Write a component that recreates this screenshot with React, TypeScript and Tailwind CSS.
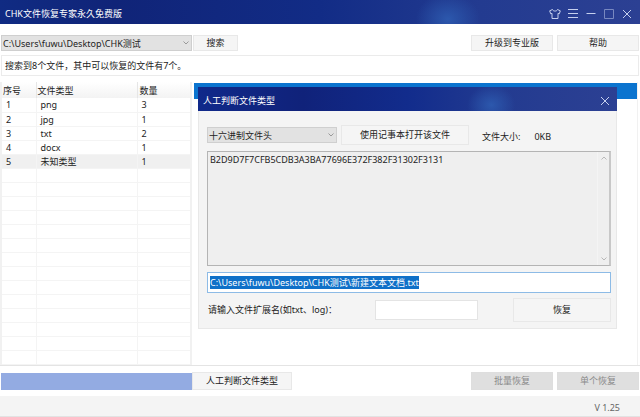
import { useEffect, useRef } from "react";
import type { ReactNode } from "react";

const results = [
  { type: "png", count: 3 },
  { type: "jpg", count: 1 },
  { type: "txt", count: 2 },
  { type: "docx", count: 1 },
  { type: "未知类型", count: 1 },
];

const emptyRows = Array.from({ length: 14 }, (_, i) => i);

function ShirtIcon() {
  return (
    <svg viewBox="0 0 12 12" className="size-3" fill="none" stroke="currentColor" strokeWidth="1" strokeLinejoin="round">
      <path d="M3.500 1.500.7 2.800l1 3 1.300-.4v5.100h6V5.400l1.300.4 1-3-2.800-1.300C8 3.600 4 3.600 3.500 1.500Z" />
    </svg>
  );
}

function MenuIcon() {
  return (
    <svg viewBox="0 0 12 12" className="size-3" fill="none" stroke="currentColor">
      <path d="M1 1.500h10M1 5.500h10M1 9.500h10" />
    </svg>
  );
}

function MinimizeIcon() {
  return (
    <svg viewBox="0 0 12 12" className="size-3" fill="none" stroke="currentColor">
      <path d="M1.500 5.500h9" />
    </svg>
  );
}

function MaximizeIcon() {
  return (
    <svg viewBox="0 0 12 12" className="size-3" fill="none" stroke="currentColor" opacity="0.5">
      <path d="M1.500 1.500h9v9h-9z" />
    </svg>
  );
}

function CloseIcon() {
  return (
    <svg viewBox="0 0 12 12" className="size-3" fill="none" stroke="currentColor">
      <path d="m2 2 8 8M10 2l-8 8" />
    </svg>
  );
}

function Chevron({ up = false }: { up?: boolean }) {
  return (
    <svg viewBox="0 0 8 8" className="size-2" fill="none" stroke="currentColor">
      <path d={up ? "m1.500 5.500 2.500-2.500 2.500 2.500" : "m1.500 2.500 2.500 2.500 2.500-2.500"} />
    </svg>
  );
}

function IconButton({ label, children }: { label: string; children: ReactNode }) {
  return (
    <button type="button" aria-label={label} className="flex text-[#c6d0ee]">
      {children}
    </button>
  );
}

function PlainButton({ children, className }: { children: ReactNode; className: string }) {
  return (
    <button type="button" className={`border border-[#e8e8e8] bg-[#f5f5f5] ${className}`}>
      {children}
    </button>
  );
}

function Dropdown({ label, value, className }: { label: string; value: string; className: string }) {
  return (
    <div className={`relative h-4 ${className}`}>
      <select
        aria-label={label}
        className="block h-full w-full appearance-none border border-[#cfcfcf] bg-[#e2e2e2] pt-px pr-4 pl-px outline-none"
      >
        <option>{value}</option>
      </select>
      <span className="pointer-events-none absolute inset-y-0 right-0.5 flex items-center text-[#999999]">
        <Chevron />
      </span>
    </div>
  );
}

function ResultTable() {
  return (
    <table className="w-full table-fixed border-collapse text-left">
      <thead>
        <tr className="h-4 bg-linear-to-b from-white to-[#f3f3f3]">
          <th className="w-[34px] border-r border-[#e6e6e6] pt-px pl-px font-normal">序号</th>
          <th className="border-r border-[#e6e6e6] pt-px pl-px font-normal">文件类型</th>
          <th className="w-[53px] pt-px pl-0.5 font-normal">数量</th>
        </tr>
      </thead>
      <tbody>
        {results.map((row, i) => (
          <tr key={row.type} className={`h-3.5 border-b border-[#f4f4f4] ${i === 4 ? "bg-[#f0f0f0]" : ""}`}>
            <td className="border-r border-[#f4f4f4] pt-px pl-1">{i + 1}</td>
            <td className="border-r border-[#f4f4f4] pt-px pl-1">{row.type}</td>
            <td className="pt-px pl-1">{row.count}</td>
          </tr>
        ))}
        {emptyRows.map((i) => (
          <tr key={i} className="h-3.5 border-b border-[#f4f4f4]">
            <td className="border-r border-[#f4f4f4]" />
            <td className="border-r border-[#f4f4f4]" />
            <td />
          </tr>
        ))}
      </tbody>
    </table>
  );
}

function TypeDialog() {
  const pathRef = useRef<HTMLInputElement>(null);

  useEffect(() => {
    pathRef.current?.focus();
    pathRef.current?.select();
  }, []);

  return (
    <section
      role="dialog"
      aria-label="人工判断文件类型"
      className="absolute top-[87px] right-[23px] left-[198px] bg-[#f4f4f4]"
    >
      <header className="flex h-6 items-center justify-between bg-[radial-gradient(ellipse_24px_20px_at_70%_75%,#2c58ad,transparent),linear-gradient(90deg,#10298a,#10227a_25%,#122c8c_50%,#233b90_72%,#2c4093)] pt-1 pr-1.5 pl-[5px] text-white">
        <h2>人工判断文件类型</h2>
        <IconButton label="关闭对话框">
          <CloseIcon />
        </IconButton>
      </header>
      <div className="flex flex-col border border-t-0 border-[#e8e8e8] pt-3.5 pr-[5px] pb-1.5 pl-2">
        <div className="flex items-center">
          <Dropdown label="显示方式" value="十六进制文件头" className="w-[130px]" />
          <PlainButton className="ml-1 h-5 w-32">使用记事本打开该文件</PlainButton>
          <span className="ml-[13px] pt-1">文件大小:</span>
          <span className="ml-3.5 pt-1">0KB</span>
        </div>
        <div className="mt-1.5 flex h-[115px] border border-[#b4b4b4] border-r-2 border-r-[#c8c8c8] bg-[#efefef]">
          <textarea
            aria-label="文件头内容"
            readOnly
            className="min-w-0 flex-1 resize-none overflow-hidden px-0.5 pt-0.5 outline-none"
            defaultValue="B2D9D7F7CFB5CDB3A3BA77696E372F382F31302F3131"
          />
          <div className="flex w-3 flex-col items-center justify-between border-l border-[#f4f4f4] py-0.5 text-[#b8b8b8]">
            <Chevron up />
            <Chevron />
          </div>
        </div>
        <input
          ref={pathRef}
          aria-label="文件路径"
          readOnly
          defaultValue="C:\Users\fuwu\Desktop\CHK测试\新建文本文档.txt"
          className="mt-1.5 h-[21px] border border-[#8dbbe6] bg-white px-0.5 outline-none selection:bg-[#0f70c8] selection:text-white"
        />
        <div className="mt-1 flex items-center pt-px">
          <label htmlFor="ext" className="w-[168px] pl-px">
            请输入文件扩展名(如txt、log)：
          </label>
          <input id="ext" className="h-5 w-[103px] border border-[#e4e4e4] bg-white px-1 outline-none" />
          <PlainButton className="ml-auto h-6 w-[98px]">恢复</PlainButton>
        </div>
      </div>
    </section>
  );
}

export default function App() {
  return (
    <div className="relative flex min-h-screen flex-col bg-white font-['Noto_Sans','Noto_Sans_CJK_SC',sans-serif] text-[9px] leading-3 text-[#222222]">
      <header className="flex h-6 items-center justify-between bg-[radial-gradient(ellipse_32px_26px_at_70%_80%,#2c58ad,transparent),linear-gradient(90deg,#102b83,#102478_18%,#122c86_50%,#233b90_75%,#2c4093)] pt-1 pr-[7px] pl-[5px] text-white">
        <h1>CHK文件恢复专家永久免费版</h1>
        <nav className="flex gap-1.5">
          <IconButton label="换肤">
            <ShirtIcon />
          </IconButton>
          <IconButton label="菜单">
            <MenuIcon />
          </IconButton>
          <IconButton label="最小化">
            <MinimizeIcon />
          </IconButton>
          <IconButton label="最大化">
            <MaximizeIcon />
          </IconButton>
          <IconButton label="关闭">
            <CloseIcon />
          </IconButton>
        </nav>
      </header>

      <div className="flex items-center pt-[11px] pr-px pb-1 pl-px">
        <Dropdown label="搜索位置" value="C:\Users\fuwu\Desktop\CHK测试" className="w-[191px]" />
        <PlainButton className="ml-px h-4 w-[45px]">搜索</PlainButton>
        <PlainButton className="ml-auto h-4 w-[82px]">升级到专业版</PlainButton>
        <PlainButton className="ml-1 h-4 w-[82px]">帮助</PlainButton>
      </div>

      <p className="mx-px flex h-[21px] items-center border border-[#ebebeb] pt-px pl-[3px]">
        搜索到8个文件，其中可以恢复的文件有7个。
      </p>

      <main className="mt-1.5 flex flex-1 border-b border-[#e4e4e4] pr-0.5">
        <div className="w-48 border-r-2 border-l-2 border-[#f1f1f1]">
          <ResultTable />
        </div>
        <div className="ml-0.5 flex-1 border-r border-[#f1f1f1]">
          <div className="mt-px h-4 bg-[#0b74cf]" />
        </div>
      </main>

      <div className="flex items-center py-1.5 pr-px pl-px">
        <div role="progressbar" aria-label="进度" aria-valuenow={100} className="h-[17px] w-[191px] bg-[#93abe2]" />
        <PlainButton className="h-[18px] w-[100px]">人工判断文件类型</PlainButton>
        <button type="button" disabled className="ml-auto h-[18px] w-[82px] border border-[#dedede] bg-[#dfdfdf] text-[#8a8a8a]">
          批量恢复
        </button>
        <button type="button" disabled className="ml-1 h-[18px] w-[82px] border border-[#dedede] bg-[#dfdfdf] text-[#8a8a8a]">
          单个恢复
        </button>
      </div>

      <footer className="flex h-[21px] items-center justify-end border-b border-[#e2e2e2] bg-[#f4f4f4] pt-1 pr-5 text-[#666666]">
        V 1.25
      </footer>

      <TypeDialog />
    </div>
  );
}
